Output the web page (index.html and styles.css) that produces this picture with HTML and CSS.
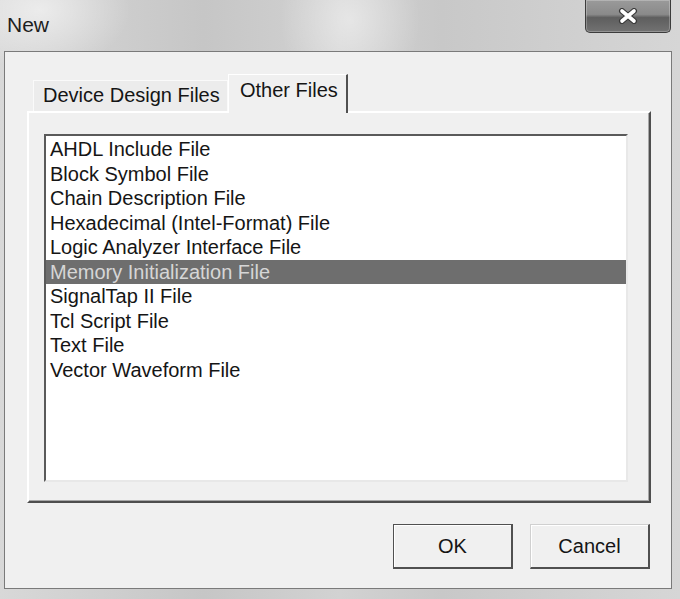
FILE: index.html
```html
<!DOCTYPE html>
<html lang="en">

<head>
  <meta charset="UTF-8" />
  <meta name="viewport" content="width=device-width, initial-scale=1.0" />
  <title>New</title>
  <link rel="stylesheet" href="styles.css">
</head>

<body>
  <div class="window">
    <div class="titlebar">
      <span class="title">New</span>
      <button class="close" aria-label="Close">
        <svg width="22" height="16" viewBox="0 0 22 16">
          <path d="M5 3 L17 13 M17 3 L5 13" stroke="#3a3a3a" stroke-width="6" stroke-linecap="round" />
          <path d="M5 3 L17 13 M17 3 L5 13" stroke="#ffffff" stroke-width="3.6" stroke-linecap="round" />
        </svg>
      </button>
    </div>

    <div class="client">
      <div class="tabs">
        <div class="tab">Device Design Files</div>
        <div class="tab selected">Other Files</div>
      </div>

      <div class="panel">
        <ul class="listbox">
          <li>AHDL Include File</li>
          <li>Block Symbol File</li>
          <li>Chain Description File</li>
          <li>Hexadecimal (Intel-Format) File</li>
          <li>Logic Analyzer Interface File</li>
          <li class="selected">Memory Initialization File</li>
          <li>SignalTap II File</li>
          <li>Tcl Script File</li>
          <li>Text File</li>
          <li>Vector Waveform File</li>
        </ul>
      </div>

      <div class="actions">
        <button class="button default">OK</button>
        <button class="button">Cancel</button>
      </div>
    </div>
  </div>
</body>

</html>
```

FILE: styles.css
```css
* {
  box-sizing: border-box;
}

html,
body {
  margin: 0;
  padding: 0;
  width: 680px;
  height: 599px;
  overflow: hidden;
  font-family: "Liberation Sans", Arial, sans-serif;
  color: #151515;
}

.window {
  width: 680px;
  height: 599px;
  background:
    radial-gradient(ellipse 90px 60px at 40px 10px, rgba(255, 255, 255, 0.55), transparent),
    radial-gradient(ellipse 70px 80px at 350px 20px, rgba(255, 255, 255, 0.45), transparent),
    linear-gradient(to right, #d8d8d8 0%, #c6c6c6 30%, #d2d2d2 50%, #c8c8c8 65%, #d6d6d6 100%);
}

.titlebar {
  height: 51px;
  display: flex;
  justify-content: space-between;
  align-items: flex-start;
}

.title {
  font-size: 21px;
  margin: 13px 0 0 7px;
  color: #1e1e1e;
}

.close {
  width: 86px;
  height: 33px;
  margin-right: 9px;
  padding: 0;
  border: 1px solid #3c3c3c;
  border-top: none;
  border-radius: 0 0 5px 5px;
  background: linear-gradient(to bottom, #9a9a9a 0%, #8a8a8a 45%, #5e5e5e 55%, #727272 100%);
  box-shadow: inset 0 0 0 1px rgba(255, 255, 255, 0.25);
  display: flex;
  align-items: center;
  justify-content: center;
}

.client {
  height: 538px;
  margin: 0 8px 0 4px;
  border: 1px solid #7a7a7a;
  background: #f0f0f0;
  padding: 21px 0 0 22px;
}

.tabs {
  display: flex;
  align-items: flex-end;
  height: 38px;
  margin-left: 6px;
  position: relative;
  z-index: 1;
}

.tab {
  height: 31px;
  padding: 3px 0 0 9px;
  width: 195px;
  font-size: 20px;
  background: #ececec;
  border: 1px solid #fafafa;
  border-bottom: none;
  margin-bottom: 0;
}

.tab.selected {
  width: 120px;
  height: 39px;
  margin-bottom: -2px;
  padding: 4px 0 0 11px;
  background: #f0f0f0;
  border-top: 1px solid #fff;
  border-left: 1px solid #fff;
  border-right: 2px solid #505050;
}

.panel {
  width: 624px;
  height: 392px;
  border-top: 2px solid #ffffff;
  border-left: 2px solid #ffffff;
  border-right: 2px solid #4e4e4e;
  border-bottom: 2px solid #4e4e4e;
  box-shadow: inset -1px -1px 0 #a8a8a8;
  padding: 21px 0 0 15px;
}

.listbox {
  list-style: none;
  margin: 0;
  width: 584px;
  height: 348px;
  padding: 1px 0 0 0;
  background: #fff;
  border-top: 2px solid #5a5a5a;
  border-left: 2px solid #5a5a5a;
  border-right: 2px solid #e8e8e8;
  border-bottom: 2px solid #e8e8e8;
}

.listbox li {
  height: 24.5px;
  line-height: 24.5px;
  padding-left: 4px;
  font-size: 20px;
  white-space: nowrap;
}

.listbox li.selected {
  background: #6e6e6e;
  color: #d6d6d6;
}

.actions {
  display: flex;
  justify-content: flex-end;
  gap: 17px;
  width: 624px;
  margin-top: 21px;
  padding-right: 1px;
}

.button {
  width: 120px;
  height: 45px;
  font-family: "Liberation Sans", Arial, sans-serif;
  font-size: 20px;
  color: #151515;
  background: #f0f0f0;
  border-top: 1px solid #d0d0d0;
  border-left: 1px solid #d0d0d0;
  border-right: 2px solid #505050;
  border-bottom: 2px solid #505050;
  box-shadow: inset 1px 1px 0 #ffffff;
  padding: 0;
}

.button.default {
  border: 2px solid #505050;
  border-top-width: 1px;
  border-left-width: 1px;
}
```
